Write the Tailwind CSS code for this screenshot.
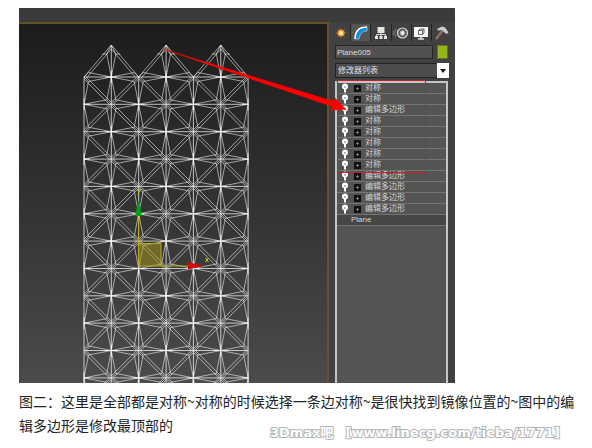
<!DOCTYPE html>
<html lang="zh-CN">
<head>
<meta charset="utf-8">
<title>图二</title>
<script src="https://cdn.jsdelivr.net/npm/@tailwindcss/browser@4"></script>
</head>
<body class="bg-white font-['Liberation_Sans','Noto_Sans_CJK_SC',sans-serif]">
<main class="relative pl-[19px] pr-3 pt-2 pb-2">
  <figure>
    <div class="relative flex h-[375px] w-full max-w-[436px] flex-col overflow-hidden bg-[#393939]">
      <div class="h-[14px] shrink-0 bg-[#3b3b3b]"></div>
      <div class="flex min-h-0 grow">
        <div class="min-w-0 grow border-t-2 border-r-2 border-[#625426] bg-linear-to-b from-[#1c1c1c] to-[#4b4b4b]"></div>
        <section class="flex w-[126px] shrink-0 flex-col bg-[#414141] pt-[2px] pl-[2px]" aria-label="修改面板">
          <nav class="mr-1 flex h-[17px] text-white">
            <button aria-label="创建" class="flex flex-1 items-center justify-center border-r border-[#222]"><svg width="16" height="16" viewBox="0 0 16 16"><g stroke="#c9601c" stroke-width="1"><path d="M8 3v10M3 8h10M4.500 4.500l7 7M11.500 4.500l-7 7"/></g><circle cx="8" cy="8" r="3.600" fill="#f28a2c"/><circle cx="8" cy="8" r="2.200" fill="#fff0a8"/></svg></button>
            <button aria-label="修改" class="flex flex-1 items-center justify-center border-r border-[#222] bg-[#555]"><svg width="16" height="16" viewBox="0 0 16 16"><path d="M2 14C2 6 6 2 14 2v4C9 6 7 9 6 14z" fill="#1689d8"/><path d="M2 14C2 6 6 2 14 2" fill="none" stroke="#fff" stroke-width="1.500"/><path d="M6 14c1-5 3-8 8-8M2 14h4M14 2v4" fill="none" stroke="#a9d9ff" stroke-width=".7"/></svg></button>
            <button aria-label="层次" class="flex flex-1 items-center justify-center border-r border-[#222]"><svg width="16" height="16" viewBox="0 0 16 16" fill="#e6e6e6"><path d="M4.500 2h7v6h-7zM2 11h3v3H2zM6.500 11h3v3h-3zM11 11h3v3h-3z"/><path d="M3.500 11V9.500h9V11M8 8v3" fill="none" stroke="#ddd"/></svg></button>
            <button aria-label="运动" class="flex flex-1 items-center justify-center border-r border-[#222]"><svg width="18" height="16" viewBox="0 0 18 16" fill="none"><circle cx="10.500" cy="8" r="5" fill="#555" stroke="#ddd" stroke-width="1.200"/><circle cx="10.500" cy="8" r="2.400" fill="#eee" stroke="#999"/><path d="M4 4Q1.500 8 4 12M1.500 6Q.5 8 1.500 10" stroke="#777"/></svg></button>
            <button aria-label="显示" class="flex flex-1 items-center justify-center border-r border-[#222]"><svg width="16" height="16" viewBox="0 0 16 16"><path d="M1 2h14v10H1z" fill="#f5f5f5"/><path d="M5 14h6M8 12v2" stroke="#ddd" stroke-width="1.500"/><path d="M5.500 5.500h4v4h-4zM5.500 5.500L7 4h4v4L9.500 9.500M9.500 5.500L11 4" fill="none" stroke="#444" stroke-width=".8"/></svg></button>
            <button aria-label="实用程序" class="flex flex-1 items-center justify-center"><svg width="16" height="16" viewBox="0 0 16 16"><path d="M3 14L10 5" stroke="#9b6f62" stroke-width="2.200"/><path d="M4 4l5-2.500 3 1 3.500 5-2 1.500L11 7 9 5 5 5.500z" fill="#ccc"/></svg></button>
          </nav>
          <div class="mt-1 ml-1 mr-[7px] flex items-center gap-1">
            <input aria-label="对象名称" value="Plane005" class="h-[14px] w-0 grow border border-[#252525] bg-[#515151] px-[1px] text-[8px] text-[#ddd]">
            <button aria-label="对象颜色" class="h-[14px] w-[11px] border border-[#637514] bg-[#94b41a]"></button>
          </div>
          <div class="relative mt-1 ml-1 mr-[6px] h-[15px]">
            <select aria-label="修改器列表" class="block h-full w-full appearance-none border border-[#222] bg-[#4d4d4d] px-[2px] text-[8px] leading-3 text-[#e0e0e0]"><option>修改器列表</option></select>
            <span class="pointer-events-none absolute inset-y-0 right-0 flex w-3 items-center justify-center bg-white"><svg width="6" height="4" viewBox="0 0 6 4"><path d="M0 0h6L3 4z" fill="#111"/></svg></span>
          </div>
          <ul id="stack" class="mt-[3px] ml-1 mr-[7px] grow border-2 border-b-0 border-[#c5c5c5] bg-[#545454] text-[8px] text-[#d5d5d5]"></ul>
        </section>
      </div>
      <svg class="absolute top-0 left-0" width="436" height="375" viewBox="19 8 436 375" fill="none" role="img" aria-label="平面网格">
        <path id="mesh" stroke="#fff" stroke-opacity=".7" stroke-width=".8"/>
        <path id="axes" stroke="#fff" stroke-opacity=".7"/>
        <path d="M139 243h22v23h-22z" fill="#a89a12" fill-opacity=".5"/>
        <path d="M138.500 217v49H188M139 243.500h22V266" stroke="#b9a91b"/>
        <path d="M138.500 200l3.500 16h-7z" fill="#04a016"/>
        <path d="M188 262l16 4-16 3.500z" fill="#cf0808"/>
        <path d="M137 189l2 3 2-3M139 192l-1 3M205.500 258l3 4M208.500 258l-3 4" stroke="#d2c52b"/>
        <path d="M337.500 80.500h88v92h-88z" stroke="#c8202a"/>
        <path d="M163 49L334 101.500l1-3.500 11 11.500-15 .5 1-3.500z" fill="#f00" stroke="#f00" stroke-width=".5"/>
      </svg>
    </div>
    <figcaption class="mt-[6px] text-[14px] leading-6 text-[#222] font-['Noto_Sans_CJK_SC',sans-serif]">图二：这里是全部都是对称~对称的时候选择一条边对称~是很快找到镜像位置的~图中的编辑多边形是修改最顶部的</figcaption>
  </figure>
  <p class="absolute bottom-0 left-[270px] flex gap-3 font-['DejaVu_Sans','Noto_Sans_CJK_SC',sans-serif] text-[13px] font-bold leading-6 whitespace-nowrap text-white [-webkit-text-stroke:2px_#b4b4b4] [paint-order:stroke_fill]"><span>3Dmax吧</span><span>[www.linecg.com/tieba/1771]</span></p>
</main>
<script>
const names = ['对称','对称','编辑多边形','对称','对称','对称','对称','对称','编辑多边形','编辑多边形','编辑多边形','编辑多边形'];
const bulb = '<svg width="8" height="10" viewBox="0 0 8 10"><circle cx="4" cy="3.500" r="3" fill="#fff"/><path d="M4 3v2" stroke="#777"/><path d="M4 6v3.500" stroke="#fff" stroke-width="2"/></svg>';
const plus = '<svg width="7" height="7" viewBox="0 0 7 7"><path d="M0 0h7v7H0z" fill="#111"/><path d="M2 3.500h3M3.500 2v3" stroke="#999" stroke-width=".7"/></svg>';
document.getElementById('stack').innerHTML = names.map(n =>
  `<li class="flex h-[11px] items-center border-b border-[#737373] pl-1 leading-none"><span class="mr-[5px]">${bulb}</span><span class="mr-1">${plus}</span>${n}</li>`).join('') +
  '<li class="flex h-[11px] items-center border-b border-[#737373] bg-[#464646] pl-[14px] leading-none">Plane</li>';

// Even nodes carry the diagonals; odd nodes are the tips of the narrow kites.
const X = i => 84 + i * 27.35, Y = j => 77 + j * 27.35;
let fine = '', bold = '';
const line = (a, b, c, d) => `M${a.toFixed(1)} ${b.toFixed(1)}L${c.toFixed(1)} ${d.toFixed(1)}`;
for (let j = 0; j <= 12; j++) for (let i = 0; i <= 6; i++) {
  const x = X(i), y = Y(j);
  if (i < 6) bold += line(x, y, X(i + 1), y);
  if (j < 12) bold += line(x, y, x, Y(j + 1));
  if ((i + j) % 2) {
    bold += line(i > 0 ? x - 6 : x, y, i < 6 ? x + 6 : x, y) + line(x, y - 6, x, y + 6);
    continue;
  }
  for (const s of [-1, 1]) for (const t of [-1, 1]) {
    if (i + s < 0 || i + s > 6) continue;
    const px = x + s * 4.5, py = y + t * 4.5, bx = X(i + s);
    fine += line(x, y, px, py) + line(px, py, bx, y);
    if (j + t < 0) continue;
    const by = Y(j + t);
    fine += line(px, py, x, by);
    if (t > 0) fine += line(x + s * 2, y, bx, by - 2) + line(x, y + 2, bx - s * 2, by);
  }
}
for (const i of [1, 3, 5]) {
  const x = X(i);
  bold += line(x, 45, x, 77);
  for (const s of [-1, 1]) fine += line(x, 45, x + s * 27.35, 77) + line(x, 49, x + s * 24, 77) +
    line(x + s * 4.5, 54, x + s * 9, 54) + line(x, 45, x + s * 4.5, 54) + line(x + s * 4.5, 54, x, 77);
}
document.getElementById('mesh').setAttribute('d', fine);
document.getElementById('axes').setAttribute('d', bold);
</script>
</body>
</html>
